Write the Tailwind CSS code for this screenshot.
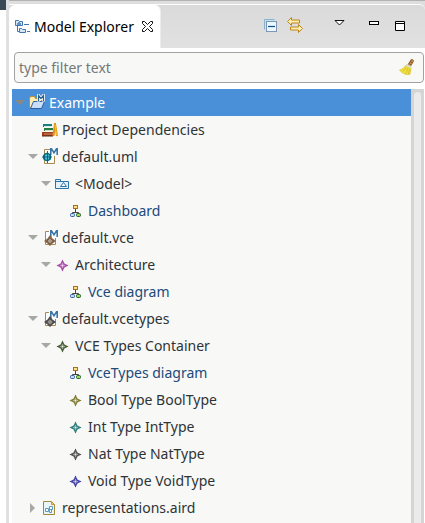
<!DOCTYPE html>
<html lang="en">
<head>
<meta charset="utf-8">
<meta name="viewport" content="width=device-width, initial-scale=1">
<title>Model Explorer</title>
<script src="https://cdn.jsdelivr.net/npm/@tailwindcss/browser@4"></script>
</head>
<body class="bg-white font-['Noto_Sans','Open_Sans',sans-serif] text-sm text-[#2e3436]">
<svg class="hidden" aria-hidden="true">
  <symbol id="open" viewBox="0 0 10 5"><path d="M0 0h10L5 5z" fill="currentColor"/></symbol>
  <symbol id="closed" viewBox="0 0 5 10"><path d="M0 0v10l5-5z" fill="currentColor"/></symbol>
  <symbol id="diagram" viewBox="0 0 16 16">
    <path d="M8.500 6v3M5.500 11V9.500h6V11" fill="none" stroke="#444"/>
    <rect x="6.500" y="2.500" width="4" height="3" fill="#ffe08a" stroke="#a8701c"/>
    <rect x="3.500" y="10.500" width="4" height="3" rx="1" fill="#c6dcf5" stroke="#3558a0"/>
    <rect x="9.500" y="10.500" width="4" height="3" rx="1" fill="#9fd84c" stroke="#1f5c2d"/>
  </symbol>
  <symbol id="star" viewBox="0 0 16 16">
    <path d="M8.500 2.500L10.500 6.500 14.500 8.500 10.500 10.500 8.500 14.500 6.500 10.500 2.500 8.500 6.500 6.500z" fill="currentColor"/>
    <path d="M8.500 3v11M3 8.500h11" stroke="currentColor"/>
    <path d="M8.500 6v5M6 8.500h5M7.500 7.500l2 2M9.500 7.500l-2 2" stroke="#fff" stroke-opacity=".45"/>
  </symbol>
  <symbol id="mfile" viewBox="0 0 16 16">
    <path d="M8 1.500H3.500v13h10V8" fill="#fff" stroke="#a98a4e"/>
    <path d="M8.500 7.500V.500h1l2.500 4 2.500-4h1v7" fill="none" stroke="#fff" stroke-width="3"/>
    <path d="M8.800 7V.800h.7l2.500 4 2.500-4h.7V7" fill="none" stroke="#3a76a8" stroke-width="1.600"/>
    <path d="M8 5l2.500 3.500L14 11l-3.500 2.500L8 16l-2.500-2.500L2 11l3.500-2.500z" fill="currentColor"/>
    <path d="M8 8l3 3-3 3-3-3z" fill="#c4c0b8" fill-opacity=".6" stroke="#555" stroke-width=".6"/>
  </symbol>
</svg>

<div class="flex min-h-screen">
  <div class="w-[6px] shrink-0"><div class="h-[10px] bg-[#3b4855]"></div></div>
  <main class="min-w-0 grow border-l-3 border-[#e0e0e0] flex flex-col">
    <header class="bg-[#dedede] border-t border-[#b4b1b1] pt-[3px]">
      <div class="flex h-11 rounded-tr-md border-t border-white bg-linear-to-b from-[#dadada] to-[#e1e1e1]">
        <div class="flex items-center w-[152px] rounded-t-md border-r border-[#ececec] bg-white pl-[6px] text-black">
          <svg class="size-4 shrink-0" viewBox="0 0 16 16" aria-hidden="true" fill="none" stroke="#3f77b0">
            <path d="M.5 6.500v-5h3l1 1h3v4z" fill="#d8e7f5"/><path d="M2 5h4M4 3v1" stroke-width="1.500"/>
            <path d="M2.500 7v5.500H4M9 5.500h5M12 12.500h3"/>
            <path d="M4.500 13.500v-4h2l1 1h3v3z" fill="#d8e7f5"/>
          </svg>
          <h1 class="ml-[3px] whitespace-nowrap">Model Explorer</h1>
          <button class="ml-2" aria-label="Close"><svg class="size-[11px]" viewBox="0 0 11 11" fill="none" stroke="#111"><path d="M.5.500h2l3 3 3-3h2v2l-3 3 3 3v2h-2l-3-3-3 3h-2v-2l3-3-3-3z"/></svg></button>
        </div>
        <div class="flex grow items-start justify-end pt-3 pr-5">
          <button class="mt-px" aria-label="Collapse all"><svg class="size-4" viewBox="0 0 16 16"><path d="M1.500 11.500v-10h10" fill="none" stroke="#86b4cf"/><path d="M2 2h9v1H3v8H2z" fill="#c5e4f2"/><rect x="3.500" y="3.500" width="10" height="10" fill="#e8f8ff" stroke="#8094b4"/><path d="M5 8.500h7" stroke="#0d4b86" stroke-width="1.200"/></svg></button>
          <button class="ml-2" aria-label="Link with editor"><svg class="size-4" viewBox="0 0 16 16" fill="#ffefaf" stroke="#bd8419"><path d="M.5 4.500l4-4v2.500h8v3h-8v2.500z"/><path d="M15.500 11.500l-4-4V10h-8v3h8v2.500z"/></svg></button>
          <button class="ml-[31px] mt-[3px]" aria-label="View menu"><svg class="h-[6px] w-[11px]" viewBox="0 0 11 6"><path d="M1 .5h9L5.500 5z" fill="#fff" stroke="#111"/></svg></button>
          <button class="ml-6 mt-1" aria-label="Minimize"><svg class="h-1 w-[10px]" viewBox="0 0 10 4"><rect x=".5" y=".5" width="9" height="3" fill="#fff" stroke="#000"/></svg></button>
          <button class="ml-4 mt-1" aria-label="Maximize"><svg class="size-[10px]" viewBox="0 0 10 10"><path d="M.5.500h9v9h-9zM0 2.500h10" fill="#fff" stroke="#000"/></svg></button>
        </div>
      </div>
    </header>

    <div class="pt-1 pl-[5px] pr-px pb-[6px]">
      <label class="flex h-[31px] items-center rounded-[4px] border border-[#a0a3a2] bg-[#f8f8f7] pl-1 pr-2">
        <input type="text" aria-label="Filter" placeholder="type filter text" class="min-w-0 grow bg-transparent outline-none placeholder:text-[#747977]">
        <svg class="size-4 -translate-y-px" viewBox="0 0 16 16" aria-hidden="true">
          <path d="M13 2L10.500 6" stroke="#8b5a28" stroke-width="3.600" stroke-linecap="round"/><path d="M13.500 1.500L10.500 6" stroke="#d9a05c" stroke-width="1.600" stroke-dasharray="1.500 1"/>
          <path d="M7 6C5.500 8.500 3 10.500 .5 11c2 3 6 5 10 5 1-2 1.500-5 1.500-7z" fill="#f0df3c" stroke="#d8c433" stroke-width=".7"/>
          <path d="M7.500 8L4 12.500M9 9l-2 5.500M10.500 10l-1 5" stroke="#c9b52c" stroke-width=".7"/>
          <path d="M7 5.500l5.500 3" stroke="#dcdac8" stroke-width="2"/>
        </svg>
      </label>
    </div>

    <div class="flex grow pl-[3px]">
      <ul class="grow bg-[#f8f8f7] text-[#2e3436]">
        <li>
          <div class="flex h-[27px] items-center bg-[#4a90d9] pl-[2px] text-white">
            <button class="flex w-[13px] justify-start pl-px text-[#8b8880]" aria-label="Collapse"><svg class="h-[5px] w-[10px]"><use href="#open"/></svg></button>
            <svg class="ml-[2px] mr-1 size-4 -translate-y-px" viewBox="0 0 16 16" aria-hidden="true">
              <path d="M.5 13.500v-9l1-2h4l1 2h6v9z" fill="#ffeeb0" stroke="#bb8d35"/>
              <path d="M1.500 14.500l3-7h11l-3 7z" fill="#c9dff8" stroke="#2f5ea8"/>
              <path d="M9.500 7.500v-6L12 4.500l2.500-3v6" fill="none" stroke="#fff" stroke-width="3"/><path d="M9.500 7V1.500L12 4.500l2.500-3V7" fill="none" stroke="#29618f" stroke-width="1.300"/>
            </svg>
            <span>Example</span>
          </div>
          <ul class="pl-[13px]">
            <li class="flex h-[27px] items-center pl-[17px]">
              <svg class="mr-1 size-4" viewBox="0 0 16 16" aria-hidden="true">
                <path d="M1 2h9v3H1z" fill="#1d7f80"/><path d="M2 4.500h8" stroke="#d5eee8"/>
                <path d="M2 6h9v3H2z" fill="#2b7a3f"/><path d="M3 8.500h8" stroke="#cfe5c0"/>
                <path d="M0 10h11v4H0z" fill="#a33c18"/><path d="M2 12h9" stroke="#c98a68"/><path d="M0 14h11" stroke="#5d2412"/>
                <path d="M13 1L11.500 14M13 2l2 12" stroke="#e2930f" stroke-width="2"/><path d="M13 3l1.500 10" stroke="#ffcb55" stroke-width=".8"/>
              </svg>
              <span>Project Dependencies</span>
            </li>
            <li>
              <div class="flex h-[27px] items-center pl-[2px]">
                <button class="flex w-[13px] justify-start pl-px text-[#a5a8a5]" aria-label="Collapse"><svg class="h-[5px] w-[10px]"><use href="#open"/></svg></button>
                <svg class="ml-[2px] mr-1 size-4 -translate-y-px" viewBox="0 0 16 16" aria-hidden="true">
                  <path d="M8 1.500H2.500v14h10V8" fill="#fff" stroke="#a98a4e"/>
                  <path d="M8.800 7V.800h.7l2.500 4 2.500-4h.7V7" fill="none" stroke="#3a76a8" stroke-width="1.600"/>
                  <circle cx="5" cy="9" r="3.500" fill="#4fc0cf" stroke="#087487" stroke-width="1.500"/><path d="M5.500 3v12M0 9h10M8 6v6M2.500 6v6" stroke="#075e78" stroke-width=".9"/>
                </svg>
                <span>default.uml</span>
              </div>
              <ul class="pl-[13px]">
                <li>
                  <div class="flex h-[27px] items-center pl-[2px]">
                    <button class="flex w-[13px] justify-start pl-px text-[#a5a8a5]" aria-label="Collapse"><svg class="h-[5px] w-[10px]"><use href="#open"/></svg></button>
                    <svg class="ml-[2px] mr-1 size-4" viewBox="0 0 16 16" aria-hidden="true" fill="#e3f1fa" stroke="#2b74a8"><path d="M.5 12.500v-9h5v2h8v7z"/><path d="M1 5.500h5"/><path d="M5.500 10.500h6l-3-4z" fill="#fff"/></svg>
                    <span>&lt;Model&gt;</span>
                  </div>
                  <ul class="pl-[13px]">
                    <li class="flex h-[27px] items-center pl-[16px]"><svg class="mr-[5px] size-4"><use href="#diagram"/></svg><span class="text-[#204a7a]">Dashboard</span></li>
                  </ul>
                </li>
              </ul>
            </li>
            <li>
              <div class="flex h-[27px] items-center pl-[2px]">
                <button class="flex w-[13px] justify-start pl-px text-[#a5a8a5]" aria-label="Collapse"><svg class="h-[5px] w-[10px]"><use href="#open"/></svg></button>
                <svg class="ml-[2px] mr-1 size-4 text-[#8a6240]"><use href="#mfile"/></svg>
                <span>default.vce</span>
              </div>
              <ul class="pl-[13px]">
                <li>
                  <div class="flex h-[27px] items-center pl-[2px]">
                    <button class="flex w-[13px] justify-start pl-px text-[#a5a8a5]" aria-label="Collapse"><svg class="h-[5px] w-[10px]"><use href="#open"/></svg></button>
                    <svg class="ml-px mr-[5px] size-4 text-[#a94fa8]"><use href="#star"/></svg>
                    <span>Architecture</span>
                  </div>
                  <ul class="pl-[13px]">
                    <li class="flex h-[27px] items-center pl-[16px]"><svg class="mr-[5px] size-4"><use href="#diagram"/></svg><span class="text-[#204a7a]">Vce diagram</span></li>
                  </ul>
                </li>
              </ul>
            </li>
            <li>
              <div class="flex h-[27px] items-center pl-[2px]">
                <button class="flex w-[13px] justify-start pl-px text-[#a5a8a5]" aria-label="Collapse"><svg class="h-[5px] w-[10px]"><use href="#open"/></svg></button>
                <svg class="ml-[2px] mr-1 size-4 text-[#4a4a4a]"><use href="#mfile"/></svg>
                <span>default.vcetypes</span>
              </div>
              <ul class="pl-[13px]">
                <li>
                  <div class="flex h-[27px] items-center pl-[2px]">
                    <button class="flex w-[13px] justify-start pl-px text-[#a5a8a5]" aria-label="Collapse"><svg class="h-[5px] w-[10px]"><use href="#open"/></svg></button>
                    <svg class="ml-px mr-[5px] size-4 text-[#4d623b]"><use href="#star"/></svg>
                    <span>VCE Types Container</span>
                  </div>
                  <ul class="pl-[13px]">
                    <li class="flex h-[27px] items-center pl-[16px]"><svg class="mr-[5px] size-4"><use href="#diagram"/></svg><span class="text-[#204a7a]">VceTypes diagram</span></li>
                    <li class="flex h-[27px] items-center pl-[16px]"><svg class="mr-[5px] size-4 text-[#85803a]"><use href="#star"/></svg><span>Bool Type BoolType</span></li>
                    <li class="flex h-[27px] items-center pl-[16px]"><svg class="mr-[5px] size-4 text-[#338080]"><use href="#star"/></svg><span>Int Type IntType</span></li>
                    <li class="flex h-[27px] items-center pl-[16px]"><svg class="mr-[5px] size-4 text-[#555]"><use href="#star"/></svg><span>Nat Type NatType</span></li>
                    <li class="flex h-[27px] items-center pl-[16px]"><svg class="mr-[5px] size-4 text-[#4747a8]"><use href="#star"/></svg><span>Void Type VoidType</span></li>
                  </ul>
                </li>
              </ul>
            </li>
            <li class="flex h-[27px] items-center pl-[2px]">
              <button class="flex w-[13px] justify-start pl-[3px] text-[#a5a8a5]" aria-label="Expand"><svg class="h-[10px] w-[5px]"><use href="#closed"/></svg></button>
              <svg class="ml-[2px] mr-1 size-4" viewBox="0 0 16 16" aria-hidden="true"><path d="M1.500 1.500h8l3 3v10h-11z" fill="#eaf4fb" stroke="#a5873c"/><path d="M9.500 1.500v3h3z" fill="#e8c265" stroke="#c79a3a"/><path d="M3.500 8.500h3v3h-3zM7.500 6.500h3v3h-3zM7.500 9.500h2v3h-2z" fill="#fff" stroke="#5a9bbf"/></svg>
              <span>representations.aird</span>
            </li>
          </ul>
        </li>
      </ul>
      <div class="mr-px flex w-[13px] shrink-0 bg-[#d5d5d5] px-[3px] pt-[3px]" aria-hidden="true"><div class="grow rounded-t-full bg-[#ebebeb]"></div></div>
    </div>
  </main>
</div>
</body>
</html>
